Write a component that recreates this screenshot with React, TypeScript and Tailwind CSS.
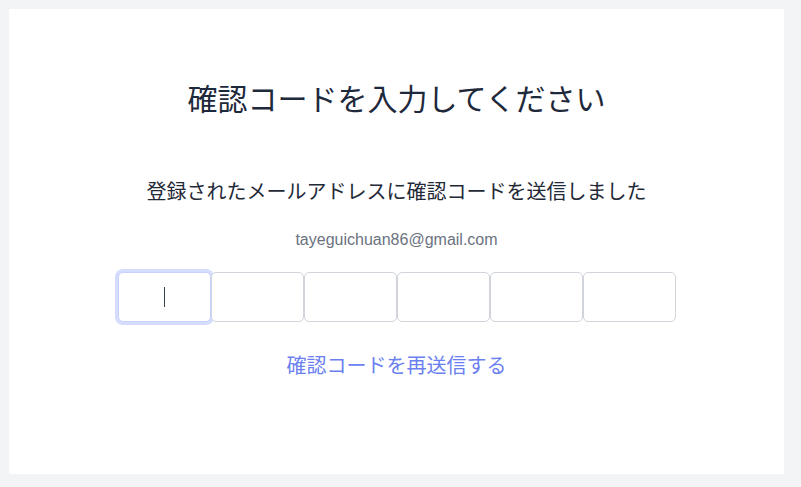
const jp = "font-['Liberation_Sans','Noto_Sans_CJK_JP',sans-serif]"

export default function App() {
  const digits = [0, 1, 2, 3, 4, 5]
  return (
    <div className="h-[487px] w-[801px] bg-[#f3f4f6] pl-[9px] pt-[9px]">
      <div className={`${jp} flex h-[465px] w-[775px] flex-col items-center bg-white pt-[71px]`}>
        {/* Title */}
        <h1 className="text-[30px] leading-[40px] text-[#1e293b]">
          確認コードを入力してください
        </h1>

        {/* Message */}
        <p className="mt-[58px] text-[20px] leading-[28px] text-[#1f2937]">
          登録されたメールアドレスに確認コードを送信しました
        </p>
        <p className="mt-[24px] text-[16px] leading-[20px] text-[#6b7280]">
          tayeguichuan86@gmail.com
        </p>

        {/* Code boxes */}
        <div className="mt-[22px] flex">
          {digits.map((i) => (
            <div
              key={i}
              className={
                i === 0
                  ? "flex h-[50px] w-[93px] items-center justify-center rounded-[5px] border border-[#c7d2fe] bg-white ring-[3px] ring-[#d5ddfe]"
                  : "flex h-[50px] w-[93px] items-center justify-center rounded-[5px] border border-[#d1d5db] bg-white"
              }
            >
              {i === 0 && <span className="h-[20px] w-[1px] bg-[#374151]" />}
            </div>
          ))}
        </div>

        {/* Resend */}
        <a href="#" className="mt-[30px] text-[20px] leading-[28px] text-[#6b7ff0]">
          確認コードを再送信する
        </a>
      </div>
    </div>
  )
}
